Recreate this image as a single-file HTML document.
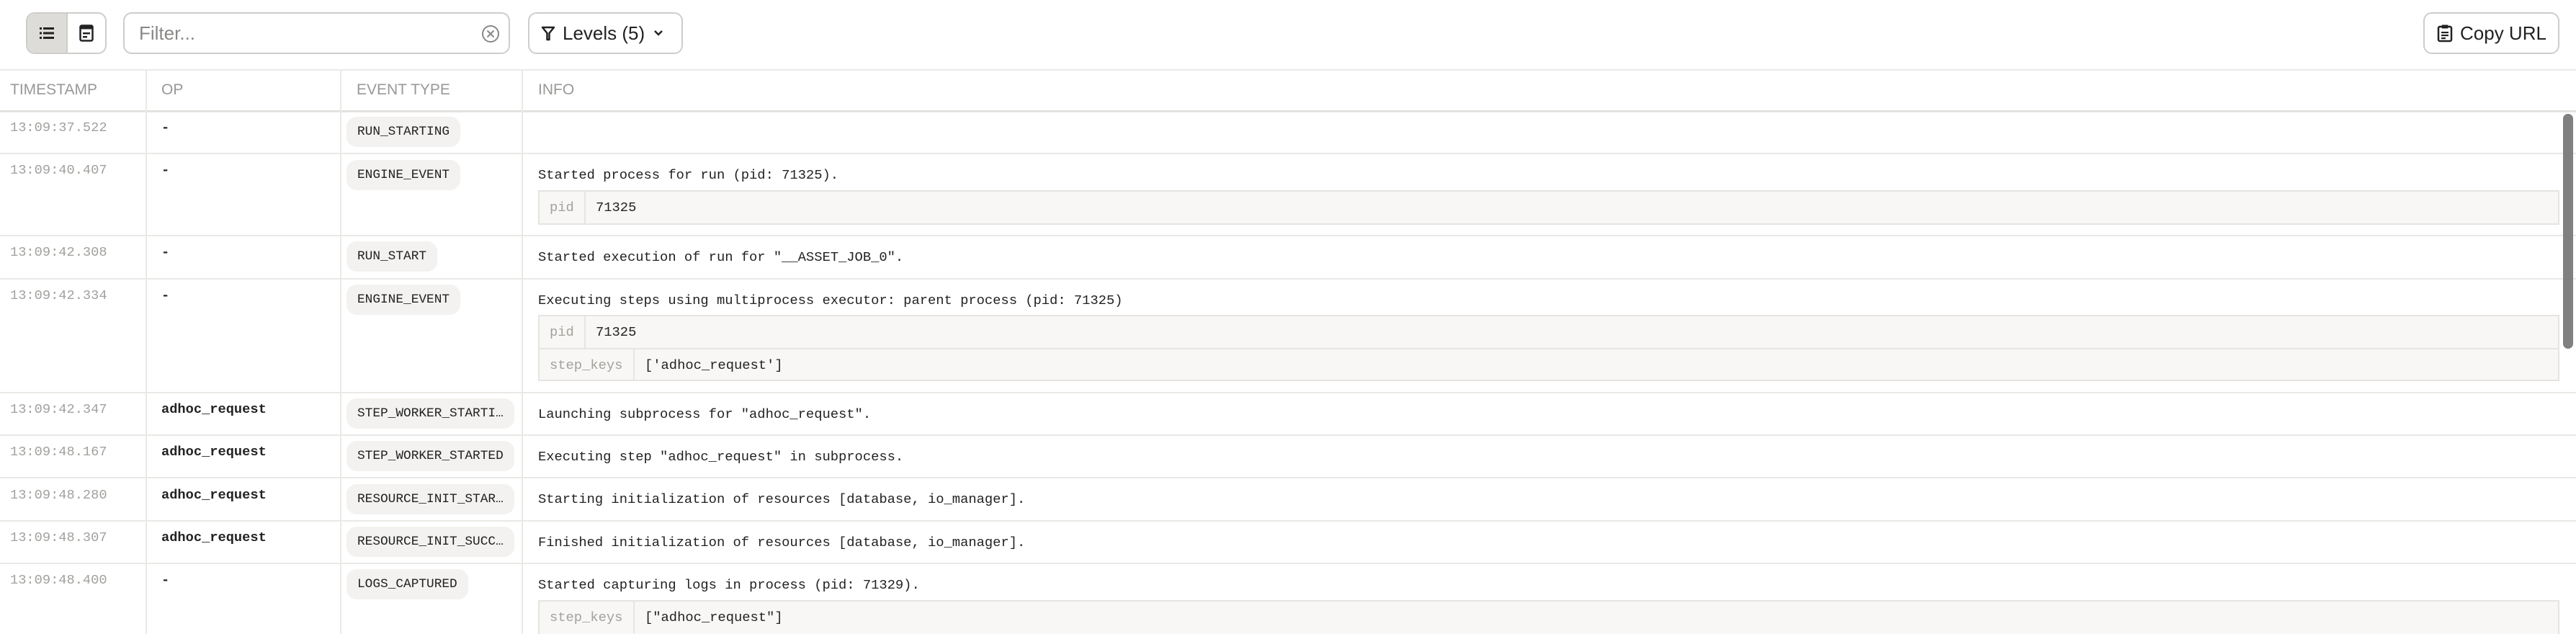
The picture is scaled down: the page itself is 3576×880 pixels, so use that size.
<!DOCTYPE html>
<html style="width:3576px;height:880px;overflow:hidden"><head><meta charset="utf-8"><style>
*{box-sizing:border-box;margin:0;padding:0}
body{width:3576px;height:880px;overflow:hidden;background:#fff;position:relative;font-family:"Liberation Sans",sans-serif;color:#222}
.abs{position:absolute}
.btn{position:absolute;top:17px;height:58px;border:2px solid #cfcdca;border-radius:12px;background:#fff;display:flex;align-items:center;font-size:26px;color:#222}
.vl{position:absolute;top:97px;bottom:0;width:2px;background:#ebe9e6}
.hl{position:absolute;left:0;right:0;height:2px;background:#ebe9e6}
.hd{position:absolute;top:110px;font-size:21px;color:#9a9896;line-height:30px}
.ts{position:absolute;left:14px;font-family:"Liberation Mono",monospace;font-size:18.7px;color:#a3a19e;line-height:22px}
.op{position:absolute;left:224px;font-family:"Liberation Mono",monospace;font-size:18.7px;font-weight:bold;color:#222;line-height:22px}
.tag{position:absolute;left:481px;height:42px;padding:0 15px;border-radius:14px;background:#f3f2f0;font-family:"Liberation Mono",monospace;font-size:17.8px;line-height:42px;color:#222;white-space:nowrap}
.info{position:absolute;left:747px;font-family:"Liberation Mono",monospace;font-size:18.8px;color:#222;line-height:22px;white-space:nowrap}
.tbl{position:absolute;left:747px;width:2806px;border:2px solid #e6e4e1;background:#f8f7f5}
.tr{height:44px;display:flex;font-family:"Liberation Mono",monospace;font-size:18.8px;line-height:44px}
.tr+.tr{border-top:2px solid #e6e4e1}
.k{color:#a3a19e;padding-left:14px;border-right:2px solid #e6e4e1}
.v{padding-left:14px;color:#222}
#wrap{position:absolute;left:0;top:0;width:3576px;height:880px;overflow:hidden}
</style></head><body><div id="wrap">
<div class="btn" style="left:36px;width:112px;overflow:hidden;padding:0">
 <div style="width:56px;height:100%;background:#dedcd9;display:flex;align-items:center;justify-content:center;border-right:2px solid #cfcdca">
  <svg width="20" height="18" viewBox="0 0 20 18"><g fill="#222"><rect x="0" y="1" width="3" height="3"/><rect x="0" y="7.5" width="3" height="3"/><rect x="0" y="14" width="3" height="3"/><rect x="5" y="1" width="15" height="3"/><rect x="5" y="7.5" width="15" height="3"/><rect x="5" y="14" width="15" height="3"/></g></svg>
 </div>
 <div style="flex:1;display:flex;align-items:center;justify-content:center">
  <svg width="20" height="24" viewBox="0 0 20 24"><rect x="1.5" y="1.5" width="17" height="21" rx="2" fill="none" stroke="#222" stroke-width="2.5"/><rect x="1.5" y="1.5" width="17" height="5" fill="#222"/><rect x="5" y="11" width="10" height="2.5" fill="#222"/><rect x="5" y="16" width="6" height="2.5" fill="#222"/></svg>
 </div>
</div>
<div class="btn" style="left:171px;width:537px;padding-left:20px;color:#8a8886">Filter...
 <svg class="abs" style="left:495px;top:15px" width="26" height="26" viewBox="0 0 26 26"><circle cx="13" cy="13" r="11" fill="none" stroke="#8a8886" stroke-width="2"/><path d="M8.5 8.5l9 9M17.5 8.5l-9 9" stroke="#8a8886" stroke-width="2"/></svg>
</div>
<div class="btn" style="left:733px;width:215px;padding-left:16px">
 <svg width="20" height="22" viewBox="0 0 20 22" style="margin-right:10px"><path d="M2 3h16l-6.5 8v9h-3v-9z" fill="none" stroke="#222" stroke-width="2.5" stroke-linejoin="round"/></svg>Levels (5)
 <svg width="14" height="10" viewBox="0 0 14 10" style="margin-left:12px"><path d="M2 2l5 5 5-5" fill="none" stroke="#222" stroke-width="2.5"/></svg>
</div>
<div class="btn" style="left:3364px;width:189px;padding-left:17px">
 <svg width="22" height="26" viewBox="0 0 22 26" style="margin-right:10px"><rect x="2" y="4" width="18" height="20" rx="2" fill="none" stroke="#222" stroke-width="2.5"/><rect x="6.5" y="1.5" width="9" height="5" rx="1" fill="#222"/><rect x="6" y="11" width="10" height="2.2" fill="#222"/><rect x="6" y="15" width="10" height="2.2" fill="#222"/><rect x="6" y="19" width="6" height="2.2" fill="#222"/></svg>Copy URL
</div>
<div class="hl" style="top:96px"></div>
<div class="hl" style="top:153px;height:3px;background:#e4e2df"></div>
<div class="vl" style="left:202px"></div>
<div class="vl" style="left:472px"></div>
<div class="vl" style="left:724px"></div>
<div class="hd" style="left:14px">TIMESTAMP</div>
<div class="hd" style="left:224px">OP</div>
<div class="hd" style="left:495px">EVENT TYPE</div>
<div class="hd" style="left:747px">INFO</div>
<div class="hl" style="top:212px"></div>
<div class="hl" style="top:326px"></div>
<div class="hl" style="top:386px"></div>
<div class="hl" style="top:544px"></div>
<div class="hl" style="top:603px"></div>
<div class="hl" style="top:662px"></div>
<div class="hl" style="top:722px"></div>
<div class="hl" style="top:781px"></div>

<div class="ts" style="top:166px">13:09:37.522</div><div class="op" style="top:166px">-</div>
<div class="tag" style="top:162px">RUN_STARTING</div>
<div class="ts" style="top:225px">13:09:40.407</div><div class="op" style="top:225px">-</div>
<div class="tag" style="top:222px">ENGINE_EVENT</div>
<div class="info" style="top:232px">Started process for run (pid: 71325).</div>
<div class="tbl" style="top:264px"><div class="tr"><div class="k" style="width:64px">pid</div><div class="v">71325</div></div></div>
<div class="ts" style="top:339px">13:09:42.308</div><div class="op" style="top:339px">-</div>
<div class="tag" style="top:335px">RUN_START</div>
<div class="info" style="top:346px">Started execution of run for "__ASSET_JOB_0".</div>
<div class="ts" style="top:399px">13:09:42.334</div><div class="op" style="top:399px">-</div>
<div class="tag" style="top:395px">ENGINE_EVENT</div>
<div class="info" style="top:406px">Executing steps using multiprocess executor: parent process (pid: 71325)</div>
<div class="tbl" style="top:437px"><div class="tr"><div class="k" style="width:64px">pid</div><div class="v">71325</div></div><div class="tr"><div class="k" style="width:132px">step_keys</div><div class="v">['adhoc_request']</div></div></div>
<div class="ts" style="top:557px">13:09:42.347</div><div class="op" style="top:557px">adhoc_request</div>
<div class="tag" style="top:553px">STEP_WORKER_STARTI…</div>
<div class="info" style="top:564px">Launching subprocess for "adhoc_request".</div>
<div class="ts" style="top:616px">13:09:48.167</div><div class="op" style="top:616px">adhoc_request</div>
<div class="tag" style="top:612px">STEP_WORKER_STARTED</div>
<div class="info" style="top:623px">Executing step "adhoc_request" in subprocess.</div>
<div class="ts" style="top:676px">13:09:48.280</div><div class="op" style="top:676px">adhoc_request</div>
<div class="tag" style="top:672px">RESOURCE_INIT_STAR…</div>
<div class="info" style="top:682px">Starting initialization of resources [database, io_manager].</div>
<div class="ts" style="top:735px">13:09:48.307</div><div class="op" style="top:735px">adhoc_request</div>
<div class="tag" style="top:731px">RESOURCE_INIT_SUCC…</div>
<div class="info" style="top:742px">Finished initialization of resources [database, io_manager].</div>
<div class="ts" style="top:794px">13:09:48.400</div><div class="op" style="top:794px">-</div>
<div class="tag" style="top:790px">LOGS_CAPTURED</div>
<div class="info" style="top:801px">Started capturing logs in process (pid: 71329).</div>
<div class="tbl" style="top:833px;height:47px;border-bottom:none"><div class="tr"><div class="k" style="width:132px">step_keys</div><div class="v">["adhoc_request"]</div></div></div>
<div class="abs" style="left:3558px;top:158px;width:14px;height:326px;border-radius:7px;background:#808080"></div>
</div></body></html>
